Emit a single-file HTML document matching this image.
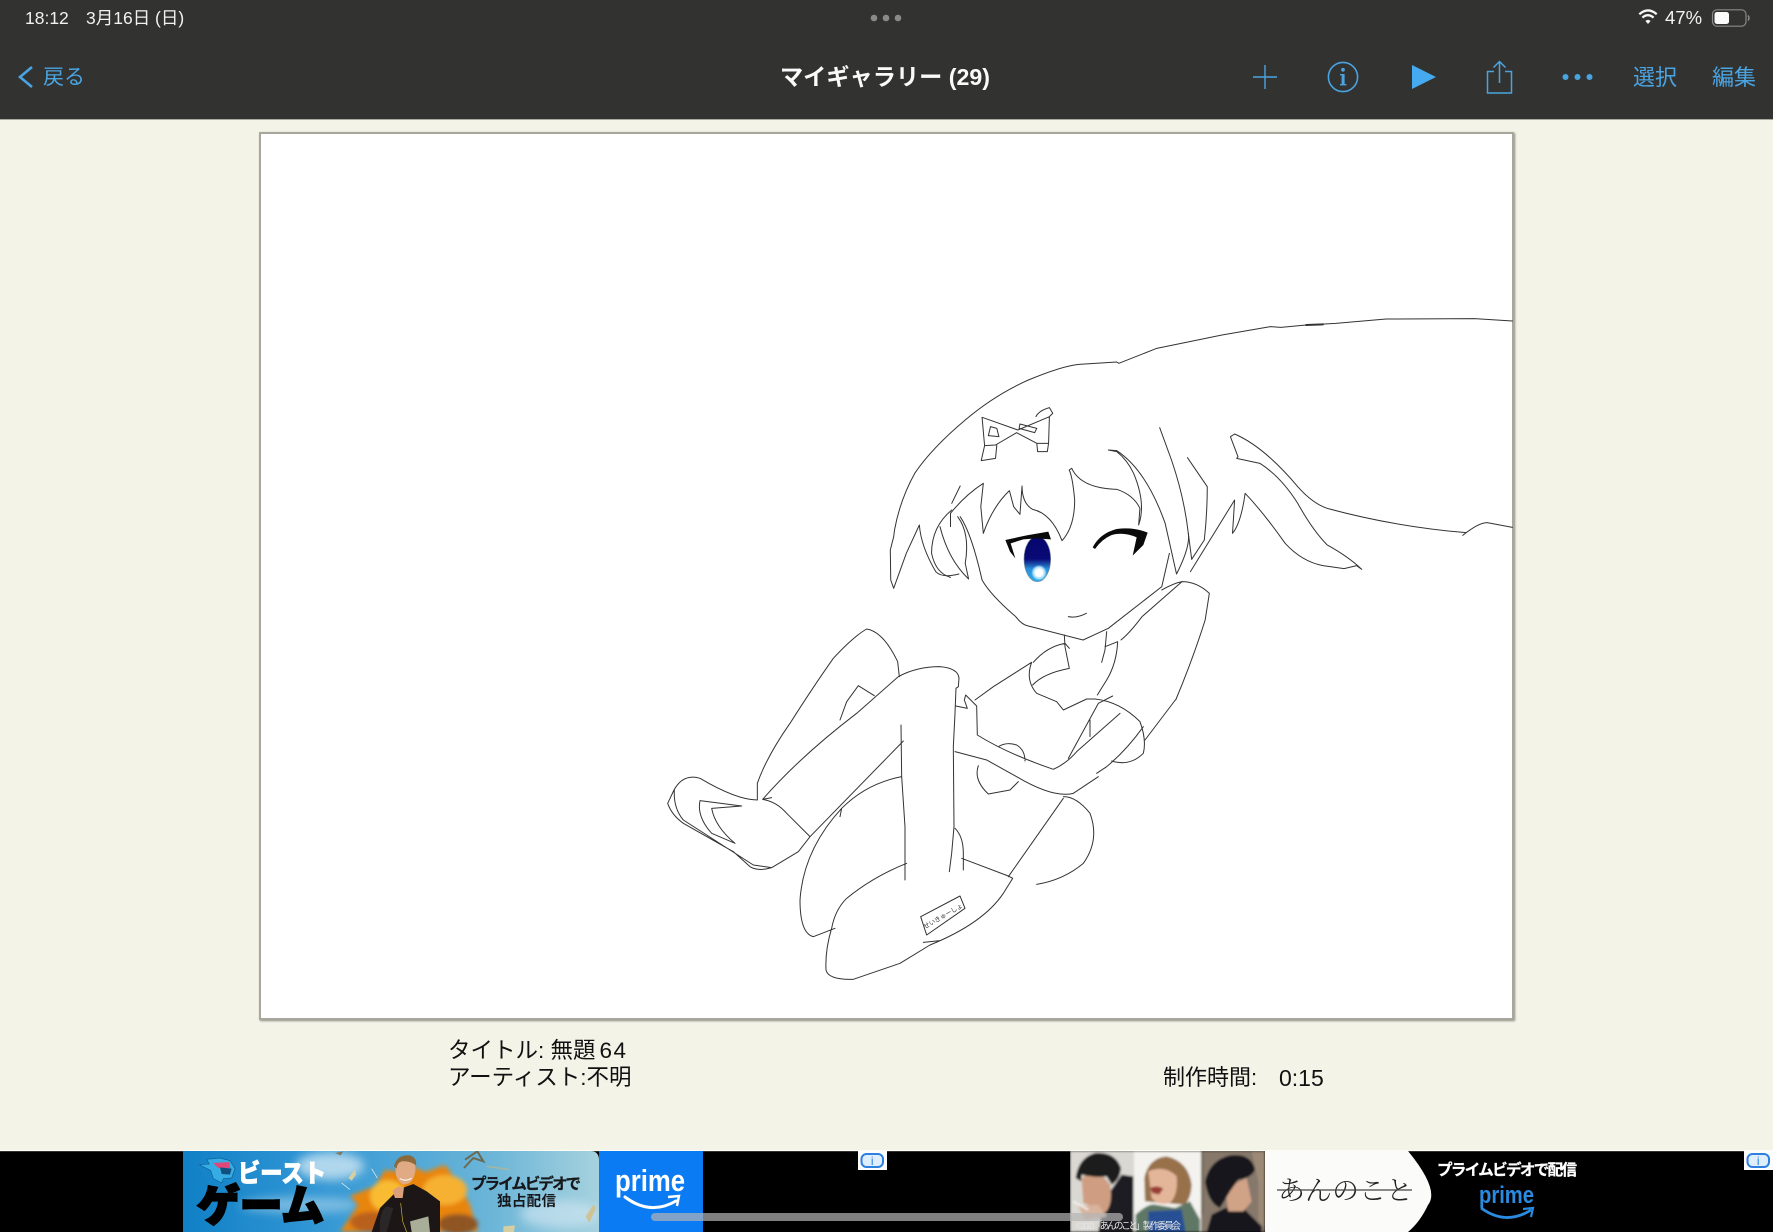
<!DOCTYPE html>
<html lang="ja"><head><meta charset="utf-8"><title>マイギャラリー</title>
<style>
html,body{margin:0;padding:0;width:1773px;height:1232px;overflow:hidden;background:#f3f3e8}
body{position:relative;font-family:"Liberation Sans","Noto Sans CJK JP",sans-serif}
.a{position:absolute;white-space:nowrap;line-height:1}
#hdr{position:absolute;left:0;top:0;width:1773px;height:120px;background:#323231;border-bottom:1px solid #a9a99f;box-sizing:border-box}
#cv{position:absolute;left:259px;top:132px;width:1251px;height:884px;background:#fff;border:2px solid #a7a79c;box-shadow:1px 1px 2px #8d8d85;box-sizing:content-box}
.b{color:#4aa4e2}
svg{position:absolute;left:0;top:0}
</style></head><body>
<div id="hdr"></div>
<div id="cv"></div>
<div class="a" style="left:25px;top:10px;font-size:17.5px;color:#f2f2f2">18:12</div>
<div class="a" style="left:86px;top:10px;font-size:17.5px;color:#f2f2f2">3月16日 (日)</div>
<div class="a" style="left:1665px;top:9px;font-size:18.5px;color:#f2f2f2">47%</div>
<div class="a b" style="left:43px;top:67px;font-size:21px">戻る</div>
<div class="a" style="left:780px;top:66px;font-size:23.2px;font-weight:bold;color:#fafafa">マイギャラリー (29)</div>
<div class="a b" style="left:1633px;top:67px;font-size:22px">選択</div>
<div class="a b" style="left:1712px;top:67px;font-size:22px">編集</div>
<div class="a" style="left:448px;top:1040px;font-size:22.5px;color:#111">タイトル: 無題<span style="margin-left:4px;letter-spacing:1.5px">64</span></div>
<div class="a" style="left:448px;top:1067px;font-size:22.5px;color:#111">アーティスト:不明</div>
<div class="a" style="left:1163px;top:1067px;font-size:22px;color:#111">制作時間:</div>
<div class="a" style="left:1279px;top:1067px;font-size:23px;color:#111">0:15</div>

<svg width="1773" height="1232" viewBox="0 0 1773 1232" xmlns="http://www.w3.org/2000/svg" font-family="'Liberation Sans','Noto Sans CJK JP',sans-serif">
<defs>
<linearGradient id="iris" x1="0" y1="0" x2="0" y2="1"><stop offset="0" stop-color="#05056b"/><stop offset=".5" stop-color="#0a0a78"/><stop offset=".72" stop-color="#2a8fdc"/><stop offset="1" stop-color="#25b0f0"/></linearGradient>
<linearGradient id="sky" x1="0" y1="0" x2="1" y2="0"><stop offset="0" stop-color="#1080c6"/><stop offset=".3" stop-color="#2f95d4"/><stop offset=".75" stop-color="#6db6d8"/><stop offset="1" stop-color="#a6d2de"/></linearGradient>
<filter id="bl2"><feGaussianBlur stdDeviation="2"/></filter>
<filter id="bl1"><feGaussianBlur stdDeviation="1"/></filter>
<filter id="bl5"><feGaussianBlur stdDeviation="5"/></filter>
<clipPath id="c1"><path d="M183,1151H590Q599,1151 599,1160V1232H183Z"/></clipPath>
<clipPath id="c2"><rect x="1070" y="1151" width="195" height="81"/></clipPath>
</defs>

<!-- nav icons -->
<g fill="none" stroke="#4aa4e2">
<path d="M32,67L20,77L32,87" stroke-width="2.6"/>
<path d="M1265,65V89M1253,77H1277" stroke-width="1.4"/>
<circle cx="1343" cy="77" r="14.6" stroke-width="1.6"/>
<path d="M1494,71.5H1487.5V93H1511.5V71.5H1505" stroke-width="1.5"/>
<path d="M1499.5,83V62M1493.5,67.5L1499.5,61.5L1505.5,67.5" stroke-width="1.5"/>
</g>
<g fill="#4aa4e2">
<rect x="1341.6" y="74" width="3" height="11"/><rect x="1340" y="74" width="3" height="1.4"/><rect x="1340" y="84" width="6.4" height="1.4"/><circle cx="1343" cy="69.8" r="1.9"/>
<path d="M1412,65L1436,77L1412,89Z" fill="#46aaf0"/>
<circle cx="1565.5" cy="77" r="3"/><circle cx="1577.5" cy="77" r="3"/><circle cx="1589.5" cy="77" r="3"/>
</g>
<g fill="#8a8a88"><circle cx="874" cy="18" r="3.3"/><circle cx="886" cy="18" r="3.3"/><circle cx="898" cy="18" r="3.3"/></g>
<!-- wifi -->
<g fill="none" stroke="#f5f5f5" stroke-width="2.3">
<path d="M1639.3,14.2Q1648,6.6 1656.7,14.2"/><path d="M1642.4,17.6Q1648,12.8 1653.6,17.6"/>
</g>
<path d="M1645.4,21Q1648,18.5 1650.6,21L1648,24Z" fill="#f5f5f5"/>
<!-- battery -->
<rect x="1712.5" y="9.8" width="33.5" height="16.4" rx="4.5" fill="none" stroke="#8a8a88" stroke-width="1.2"/>
<rect x="1714.5" y="12" width="14.5" height="12" rx="2.5" fill="#fbfbfb"/>
<path d="M1748,15.5Q1750,18 1748,20.5" fill="none" stroke="#8a8a88" stroke-width="1.5"/>

<!-- drawing: upper section -->
<g transform="translate(860,300) scale(.42092,.33333)" fill="none" stroke="#333" stroke-linejoin="round" stroke-linecap="round">
<path vector-effect="non-scaling-stroke" stroke-width="1" d="M1550,63L1460,56L1250,57L1130,70L1060,75L1000,82L975,80L860,105L705,145L615,190L610,186L520,193Q480,198 400,240Q320,285 250,360Q170,445 130,520Q95,600 82,690L80,710L72,750L73,840L80,865L110,760L141,675Q145,740 180,815Q195,835 235,822"/>
<path vector-effect="non-scaling-stroke" stroke-width="2" d="M1060,75L1100,73"/>
<path vector-effect="non-scaling-stroke" stroke-width="1" d="M290,352L375,390L450,350L448,430L420,430L372,398L322,435L296,437ZM325,435L322,475L288,482L296,437M420,430L422,455L445,455L448,430M418,350Q425,332 450,323L458,340L448,352M380,372L420,385L415,398L378,385ZM310,380L305,407L330,410L325,385Z"/>
<path vector-effect="non-scaling-stroke" stroke-width="1" d="M238,558L218,610M215,680L215,640Q250,585 293,550L287,620L293,700Q315,620 355,572L365,620L380,643L385,558Q385,610 410,628Q455,640 480,722Q510,680 510,600Q505,530 497,510L503,505Q525,565 610,568Q650,585 665,625L662,675Q680,610 650,520Q635,480 610,455L590,450L610,452Q680,510 725,670L752,822Q785,740 780,700Q770,590 740,480L712,383"/>
<path vector-effect="non-scaling-stroke" stroke-width="1" d="M778,473L825,560Q825,640 818,720L788,778L780,700M785,815L890,600L885,700Q905,670 915,580Q960,640 1010,730Q1050,785 1100,797L1150,806L1180,797L1192,808Q1160,770 1110,735Q1075,690 1040,610Q1000,530 950,490L895,475L898,470L880,410L890,402Q960,440 1040,560Q1075,610 1110,625Q1270,680 1440,698M1432,706Q1470,668 1490,668L1550,682"/>
<path vector-effect="non-scaling-stroke" stroke-width="1" d="M238,650Q265,700 290,840Q310,885 370,950Q385,975 400,978L530,1020L590,985L717,860L735,760"/>
<path vector-effect="non-scaling-stroke" stroke-width="1" d="M218,630Q170,680 170,760Q180,820 215,832M190,680Q210,780 258,837L250,790Q262,700 232,650"/>
<path vector-effect="non-scaling-stroke" stroke-width="1" d="M717,870Q745,850 765,845Q800,845 830,880L820,960Q790,1080 750,1200M765,845L670,950Q640,1000 620,1020"/>
<path vector-effect="non-scaling-stroke" stroke-width="1" d="M495,950Q515,955 538,940"/>
</g>

<!-- drawing: lower section -->
<g transform="translate(640,600) scale(.33333)" fill="none" stroke="#333" stroke-linejoin="round" stroke-linecap="round">
<path vector-effect="non-scaling-stroke" stroke-width="1" d="M352,600L352,550Q380,470 450,370Q520,260 580,175Q640,110 680,87Q730,95 773,185L778,230M600,360L620,305L655,257L703,287M368,598Q480,470 650,340L775,230Q830,200 900,200Q955,205 957,235L955,260L948,265L945,340L940,440L942,680L935,760L928,815M352,600Q290,600 180,535Q130,520 102,570L83,610Q95,645 130,670L280,755L330,800Q355,815 395,803L475,755L510,710L440,640Q410,605 368,598L395,593M103,570Q100,625 130,660L340,795L395,803M305,618L180,602Q170,650 215,700L285,730Q225,680 215,625L305,618M510,710L790,423M600,650L605,625Q680,550 785,530M605,625Q490,750 480,900Q480,1000 520,1010L585,985M783,375L785,530L795,680L795,840M800,790Q700,830 620,895Q585,930 575,985Q555,1050 558,1110Q565,1140 640,1138L780,1090L870,1035Q1030,970 1090,880L1118,835L1105,828L965,775M850,1027L900,1022M1105,830L1270,595M1270,590Q1310,590 1350,640Q1380,720 1330,790Q1270,840 1190,853M945,685Q970,710 970,760V810M842,950L960,888L975,925L860,1005ZM948,318L982,325L973,300L977,285L1010,318L1012,405Q1100,460 1240,508Q1280,490 1310,455L1440,340M1005,300L1060,260L1175,187M1180,187Q1220,140 1275,130L1288,145M1273,105L1275,140L1288,205Q1210,220 1178,255M1175,187Q1155,240 1190,280L1250,305L1270,330L1340,297L1365,297Q1440,305 1500,365Q1520,420 1510,460Q1470,500 1415,483M1510,380Q1460,450 1400,500L1370,520M1375,530L1300,580Q1240,595 1130,530L1040,480L945,455M1075,440Q1100,425 1130,435Q1155,450 1155,483M1015,497Q1000,540 1045,582L1110,570L1135,545M1285,475L1375,310L1418,288M1350,360L1350,410M1400,95L1395,150L1385,187M1395,140L1433,125Q1430,190 1400,240L1372,285M1515,420L1606,300"/>
</g>
<text transform="translate(925,929) rotate(-30)" font-size="6.3" fill="#333">せいきゅーしょ</text>

<!-- eyes -->
<g transform="translate(980,510) scale(.33333)">
<ellipse cx="172" cy="147" rx="40" ry="68" fill="url(#iris)" stroke="#7a8a9a" stroke-width="2"/>
<circle cx="177" cy="188" r="20" fill="#bfeaff" filter="url(#bl2)"/>
<circle cx="177" cy="188" r="13" fill="#fff"/>
<path d="M76,90L140,76L205,65L213,88L170,85L130,88L92,100L106,145L90,125Z" fill="#0a0a0a"/>
<path d="M338,112Q360,70 410,57Q460,50 503,68L490,105L458,137L470,82Q430,65 395,75Q365,88 345,117Z" fill="#0a0a0a"/>
</g>

<!-- ad bar -->
<rect x="0" y="1151" width="1773" height="81" fill="#000"/>
<rect x="0" y="1150" width="1773" height="1.2" fill="#fdfdf5"/>

<!-- ad 1 -->
<rect x="599" y="1151" width="104" height="81" fill="#0a7bf2"/>
<g clip-path="url(#c1)">
<rect x="183" y="1151" width="416" height="81" fill="url(#sky)"/>
<g filter="url(#bl5)" fill="#cfe6f2" opacity=".8">
<ellipse cx="330" cy="1166" rx="34" ry="14"/><ellipse cx="300" cy="1205" rx="60" ry="8" opacity=".6"/><ellipse cx="560" cy="1214" rx="40" ry="14" opacity=".8"/>
</g>
<g filter="url(#bl2)">
<path d="M340,1232L358,1205L350,1196L375,1186L385,1170L402,1172L410,1165L425,1172L445,1165L460,1185L470,1205L478,1232Z" fill="#e8850f"/>
<ellipse cx="388" cy="1196" rx="18" ry="16" fill="#f9bb30"/><ellipse cx="445" cy="1190" rx="22" ry="15" fill="#f6b030"/><ellipse cx="372" cy="1222" rx="22" ry="10" fill="#b9601a"/><ellipse cx="458" cy="1224" rx="20" ry="10" fill="#8f5422"/>
</g>
<g transform="translate(180,1148) scale(.33333)">
<path d="M575,252L600,180L640,140L662,122L700,108L740,130L780,160L780,252Z" fill="#1a1718" filter="url(#bl1)"/>
<path d="M645,45Q670,20 700,35Q712,60 702,85Q695,108 670,110Q652,100 648,80Z" fill="#e0ab84"/>
<path d="M642,55Q650,18 690,22Q712,30 708,52Q690,38 665,40Q650,45 650,62Z" fill="#8a6a3c"/>
<path d="M660,92Q680,102 695,90" stroke="#fff" stroke-width="3" fill="none"/>
<path d="M638,130Q650,110 672,118L668,150L645,150Z" fill="#dca07a"/>
<path d="M690,220L745,205L750,252H695Z" fill="#a8ae98"/>
<path d="M662,165L668,220L680,252" stroke="#c9b23a" stroke-width="2" fill="none"/>
<path d="M600,255Q595,190 620,175L640,180L620,252Z" fill="#2b2627"/>
<path d="M58,50L88,48L80,34L120,30L150,38L165,62L155,90L130,92L125,105L100,92L92,68Z" fill="#35ade4" stroke="#0d5f94" stroke-width="2"/>
<path d="M100,45L148,42L150,60L115,60Z" fill="#e0487a"/>
<path d="M120,58L155,62L150,80L125,78Z" fill="#10507e"/>
<path d="M505,90L525,65L528,80L515,98Z" fill="#d8cfa0"/><path d="M465,15L490,10L482,22Z" fill="#7d7a60"/>
<path d="M575,62L592,90M485,105L510,125" stroke="#f4f4f4" stroke-width="2"/>
</g>
<g transform="translate(440,1148) scale(.33333)">
<path d="M75,35L112,10L130,40L100,30L72,60" fill="none" stroke="#6c6a50" stroke-width="6" filter="url(#bl1)"/>
<path d="M437,205L460,170L468,180L448,225Z" fill="#cfc395"/>
<path d="M190,235L225,232L222,252H190Z" fill="#d6cda0"/>
<path d="M140,55L210,65" stroke="#bdb690" stroke-width="5" opacity=".7" filter="url(#bl1)"/>
</g>
</g>
<text x="238" y="1182" font-size="25" font-weight="900" fill="#fff" textLength="88" lengthAdjust="spacingAndGlyphs" stroke="#fff" stroke-width=".8">ビースト</text>
<text x="197" y="1221" font-size="43" font-weight="900" fill="#000" stroke="#000" stroke-width="2.2" textLength="127" lengthAdjust="spacingAndGlyphs">ゲーム</text>
<text x="471" y="1189" font-size="15.5" font-weight="bold" fill="#16181c" stroke="#16181c" stroke-width=".3" textLength="110">プライムビデオで</text>
<text x="497" y="1206" font-size="14.5" font-weight="bold" fill="#16181c" textLength="59">独占配信</text>
<text x="615" y="1191" font-size="31" font-weight="bold" fill="#fff" textLength="70" lengthAdjust="spacingAndGlyphs">prime</text>
<path d="M625,1197Q650,1216 676,1201" fill="none" stroke="#fff" stroke-width="3" stroke-linecap="round"/>
<path d="M668,1197L679,1196L677,1206" fill="none" stroke="#fff" stroke-width="2.4"/>
<rect x="858" y="1151" width="29" height="19" fill="#fdfdfd"/>
<rect x="861.5" y="1154" width="21.5" height="13" rx="5" fill="#dfeefc" stroke="#2d7fe0" stroke-width="2"/>
<text x="872.2" y="1165" font-size="12" text-anchor="middle" fill="#2d7fe0">i</text>

<!-- ad 2 -->
<path d="M1265,1151H1408Q1440,1190 1428,1205Q1420,1222 1408,1232H1265Z" fill="#fbfbfa"/>
<g clip-path="url(#c2)">
<g filter="url(#bl1)">
<rect x="1070" y="1151" width="64" height="81" fill="#dad8d2"/>
<rect x="1134" y="1151" width="67" height="81" fill="#f3f2ee"/>
<rect x="1201" y="1151" width="64" height="81" fill="#86786a"/>
<g transform="translate(1065,1148) scale(.33333)">
<path d="M100,252L115,160L170,80L205,85V252Z" fill="#1e1d22"/>
<path d="M50,95Q60,70 110,80L135,110Q145,170 120,195L95,180L55,165Z" fill="#cf9e82"/>
<path d="M32,90Q40,30 90,15Q150,10 168,60Q165,95 140,110L125,85Q90,90 50,80L48,100Z" fill="#1c1a1c"/>
<path d="M40,175L100,170L125,205L60,215Z" fill="#d8b39d"/>
<path d="M24,160L70,185" stroke="#f5f5f0" stroke-width="5"/>
<path d="M238,90Q250,30 305,25Q370,40 380,110Q378,150 360,170L240,160Z" fill="#98714c"/>
<path d="M250,70Q300,50 335,85Q340,140 315,165Q280,175 260,150Z" fill="#e4b699"/>
<path d="M255,120Q275,110 295,122L282,140L262,135Z" fill="#9a3c36"/>
<path d="M212,200Q250,165 270,170L330,180L375,160L405,215V252H212Z" fill="#5f7866"/>
<path d="M250,190L350,185L362,252H250Z" fill="#264f94"/>
<path d="M425,252L440,200L480,180L540,185L590,235V252Z" fill="#17171a"/>
<path d="M480,120L545,90L560,160L535,190L490,190Z" fill="#d0a286"/>
<path d="M420,100Q435,35 495,22Q560,15 570,65Q560,90 520,95L495,130L465,180Q430,165 420,100Z" fill="#15141a"/>
<path d="M410,10H415V200H410Z" fill="#6a5e50"/>
<path d="M560,10L600,12V240L580,220V100Z" fill="#9c8a76"/>
</g>
</g>
</g>
<text x="1076" y="1229" font-size="9.5" fill="#e6e6e6" textLength="105">©2023「あんのこと」製作委員会</text>
<text x="1278" y="1200" font-size="27" fill="#222" font-family="'Noto Serif CJK SC','Noto Serif CJK JP',serif" textLength="135" font-weight="300">あんのこと</text>
<path d="M1277,1190H1412" stroke="#444" stroke-width="1.2"/>
<text x="1437" y="1175" font-size="15.5" font-weight="bold" fill="#fff" stroke="#fff" stroke-width=".3" textLength="140">プライムビデオで配信</text>
<text x="1479" y="1203" font-size="24" font-weight="bold" fill="#2a8be0" textLength="55" lengthAdjust="spacingAndGlyphs">prime</text>
<path d="M1481,1208Q1506,1226 1531,1210" fill="none" stroke="#2a8be0" stroke-width="2.8"/>
<path d="M1523,1209L1533,1208L1531,1217" fill="none" stroke="#2a8be0" stroke-width="2.2"/>
<rect x="1744" y="1151" width="29" height="19" fill="#fdfdfd"/>
<rect x="1747.5" y="1154" width="21.5" height="13" rx="5" fill="#dfeefc" stroke="#2d7fe0" stroke-width="2"/>
<text x="1758.2" y="1165" font-size="12" text-anchor="middle" fill="#2d7fe0">i</text>
<rect x="651" y="1213" width="472" height="8" rx="4" fill="#b5b5b5" fill-opacity=".7"/>
</svg>
</body></html>
